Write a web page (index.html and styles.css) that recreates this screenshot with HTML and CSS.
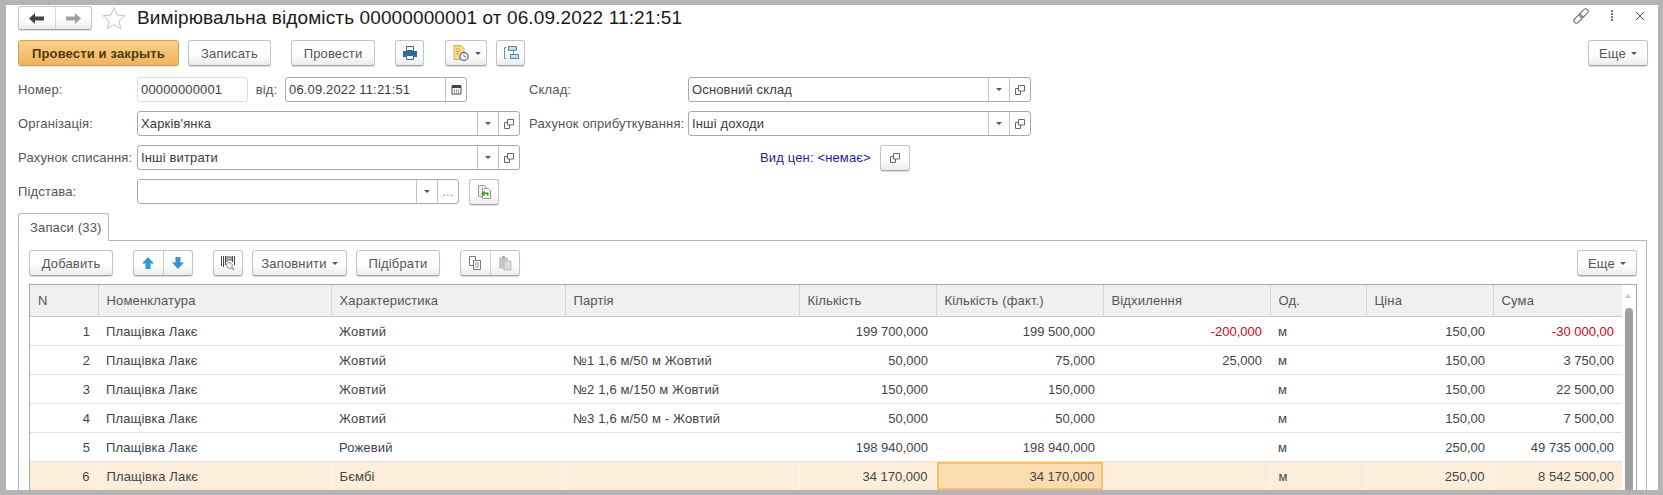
FILE: index.html
```html
<!DOCTYPE html>
<html lang="uk">
<head>
	<meta charset="UTF-8">
	<title>Вимірювальна відомість</title>
	<link rel="stylesheet" href="styles.css">
</head>
<body>

<svg width="0" height="0" class="defs">
	<symbol id="i-open" viewBox="0 0 12 12">
		<path d="M4.500 1.500h6v5.500h-6z" fill="#fff" stroke="#666"/>
		<path d="M4.500 4.500h-3v6h5v-3.500" fill="none" stroke="#666"/>
	</symbol>
</svg>

<div class="window">

	<div class="titlebar">
		<div class="btn nav-group">
			<span class="nav-cell">
				<svg width="15" height="11" viewBox="0 0 15 11"><path d="M0 5.500l6-5.500v3.500h9v4h-9v3.500z" fill="#444"/></svg>
			</span>
			<span class="nav-cell">
				<svg width="15" height="11" viewBox="0 0 15 11"><path d="M15 5.500l-6-5.500v3.500h-9v4h9v3.500z" fill="#a0a0a0"/></svg>
			</span>
		</div>
		<svg class="star" width="24" height="24" viewBox="0 0 24 24"><path d="M12 1.500l3 7.500 8 .7-6.100 5.200 1.900 7.900-6.800-4.200-6.800 4.200 1.900-7.900-6.100-5.200 8-.7z" fill="#fff" stroke="#c4c4c4"/></svg>
		<h1 class="title">Вимірювальна відомість 00000000001 от 06.09.2022 11:21:51</h1>
		<div class="win-icons">
			<svg width="16" height="16" viewBox="0 0 16 16" fill="none" stroke="#666"><g transform="rotate(-45 8 8)"><rect x="-1" y="5.500" width="10" height="5" rx="2.500"/><rect x="7" y="5.500" width="10" height="5" rx="2.500"/></g></svg>
			<svg width="4" height="12" viewBox="0 0 4 12"><path d="M1 0h2v2h-2zM1 3h2v2h-2zM1 6h2v2h-2zM1 9h2v2h-2z" fill="#777"/></svg>
			<svg width="10" height="10" viewBox="0 0 10 10"><path d="M1 1l8 8M9 1l-8 8" stroke="#666" fill="none"/></svg>
		</div>
	</div>

	<div class="toolbar main-bar">
		<button class="btn btn-primary">Провести и закрыть</button>
		<button class="btn w-save">Записать</button>
		<button class="btn w-post">Провести</button>
		<button class="btn icon-btn w-print">
			<svg width="16" height="16" viewBox="0 0 16 16"><path d="M4.500 1.500h7v4h-7z" fill="#fff" stroke="#2f6a94"/><path d="M1 6h14v6h-3v-2h-8v2h-3z" fill="#2f6a94"/><path d="M4.500 10.500h7v4h-7z" fill="#fff" stroke="#2f6a94"/></svg>
		</button>
		<button class="btn icon-btn w-report">
			<svg width="18" height="18" viewBox="0 0 18 18"><path d="M2 1.500h7l3 3v11h-10z" fill="#f7dc8a" stroke="#d0ad4c"/><path d="M4 5h4M4 7.500h4M4 10h3" stroke="#c9a23a"/><circle cx="12" cy="12.500" r="4" fill="#fff" stroke="#5b7fa3" stroke-width="1.500"/><path d="M12 10.500v2.200h2" fill="none" stroke="#5b7fa3"/></svg>
			<span class="caret"></span>
		</button>
		<button class="btn icon-btn w-struct">
			<svg width="16" height="16" viewBox="0 0 16 16"><path d="M3.500 2.500h-2v11h2" fill="none" stroke="#5d8fb3"/><path d="M10.500 5.500v4" stroke="#5d8fb3"/><path d="M5.500 1.500h8v4h-8zM7.500 9.500h8v4h-8z" fill="#c5dcec" stroke="#4f86ad"/></svg>
		</button>
		<button class="btn w-more push-right">Еще <span class="caret"></span></button>
	</div>

	<div class="form">
		<div class="form-row">
			<label class="lbl">Номер:</label>
			<div class="field field-num"><span class="val">00000000001</span></div>
			<span class="lbl-from">від:</span>
			<div class="field field-date">
				<span class="val">06.09.2022 11:21:51</span>
				<span class="cell"><svg width="11" height="11" viewBox="0 0 11 11"><path d="M1 2h9v8h-9z" fill="#fff" stroke="#444"/><path d="M1 1h9v3h-9zM3 5.500h1v1h-1zM5 5.500h1v1h-1zM7 5.500h1v1h-1zM3 7.500h1v1h-1zM5 7.500h1v1h-1zM7 7.500h1v1h-1z" fill="#444"/></svg></span>
			</div>
			<label class="lbl lbl-right lbl-first">Склад:</label>
			<div class="field field-right">
				<span class="val">Основний склад</span>
				<span class="cell"><span class="caret"></span></span>
				<span class="cell"><svg width="12" height="12"><use href="#i-open"/></svg></span>
			</div>
		</div>
		<div class="form-row">
			<label class="lbl">Організація:</label>
			<div class="field field-wide">
				<span class="val">Харків'янка</span>
				<span class="cell"><span class="caret"></span></span>
				<span class="cell"><svg width="12" height="12"><use href="#i-open"/></svg></span>
			</div>
			<label class="lbl lbl-right">Рахунок оприбуткування:</label>
			<div class="field field-right">
				<span class="val">Інші доходи</span>
				<span class="cell"><span class="caret"></span></span>
				<span class="cell"><svg width="12" height="12"><use href="#i-open"/></svg></span>
			</div>
		</div>
		<div class="form-row">
			<label class="lbl">Рахунок списання:</label>
			<div class="field field-wide">
				<span class="val">Інші витрати</span>
				<span class="cell"><span class="caret"></span></span>
				<span class="cell"><svg width="12" height="12"><use href="#i-open"/></svg></span>
			</div>
			<span class="price-type">Вид цен: &lt;немає&gt;</span>
			<button class="btn icon-btn w-open"><svg width="12" height="12"><use href="#i-open"/></svg></button>
		</div>
		<div class="form-row">
			<label class="lbl">Підстава:</label>
			<div class="field field-base">
				<span class="val"></span>
				<span class="cell"><span class="caret"></span></span>
				<span class="cell dots">...</span>
			</div>
			<button class="btn icon-btn w-open base-btn">
				<svg width="16" height="16" viewBox="0 0 16 16"><path d="M2.500 1.500h6l2 2v9h-8z" fill="#eee" stroke="#999"/><path d="M6.500 4.500h6l2 2v8h-8z" fill="#f6f6f6" stroke="#999"/><path d="M5 9.500l3.500-3v2h4v3h-2v-1.500h-2v2.500z" fill="#3d9a1d"/></svg>
			</button>
		</div>
	</div>

	<div class="tabs">
		<div class="tab">Запаси (33)</div>
	</div>

	<div class="panel">
		<div class="toolbar table-bar">
			<button class="btn w-add">Добавить</button>
			<div class="btn btn-group w-arrows">
				<span class="group-cell">
					<svg width="14" height="14" viewBox="0 0 14 14"><path d="M7 1l6 6.500h-3.500v5.500h-5v-5.500h-3.500z" fill="#2a9bd8"/></svg>
				</span>
				<span class="group-cell">
					<svg width="14" height="14" viewBox="0 0 14 14"><path d="M7 13l6-6.500h-3.500v-5.500h-5v5.500h-3.500z" fill="#3f8fcf"/></svg>
				</span>
			</div>
			<button class="btn icon-btn w-barcode">
				<svg width="16" height="16" viewBox="0 0 16 16"><path d="M1.500 1v10M3.500 1v11M5.500 1v9M7 1v6M9 1v5M11 1v5M12.500 1v6M14.500 1v9" stroke="#444" fill="none"/><circle cx="9.500" cy="10.500" r="3" fill="#eee" stroke="#999"/><path d="M11.500 12.500l2.500 2.500" stroke="#999" stroke-width="1.500"/></svg>
			</button>
			<button class="btn w-fill">Заповнити <span class="caret"></span></button>
			<button class="btn w-pick">Підібрати</button>
			<div class="btn btn-group w-copy">
				<span class="group-cell">
					<svg width="16" height="16" viewBox="0 0 16 16"><path d="M2.500 1.500h6v9h-6z" fill="#fff" stroke="#777"/><path d="M6.500 5.500h7v9h-7z" fill="#fff" stroke="#777"/><path d="M8 8h4M8 10h4M8 12h4" stroke="#999"/></svg>
				</span>
				<span class="group-cell is-off">
					<svg width="16" height="16" viewBox="0 0 16 16"><path d="M2 2.500h9v11h-9z" fill="#bbb"/><path d="M5 1h3v3h-3z" fill="#999"/><path d="M7 6h7v9h-7z" fill="#d5d5d5" stroke="#aaa"/></svg>
				</span>
			</div>
			<button class="btn w-more push-right">Еще <span class="caret"></span></button>
		</div>

		<div class="grid-wrap">
			<table class="grid">
				<colgroup>
					<col class="c-n"><col class="c-name"><col class="c-char"><col class="c-batch"><col class="c-qty"><col class="c-fact"><col class="c-dev"><col class="c-unit"><col class="c-price"><col class="c-sum">
				</colgroup>
				<thead>
					<tr><th>N</th><th>Номенклатура</th><th>Характеристика</th><th>Партія</th><th>Кількість</th><th>Кількість (факт.)</th><th>Відхилення</th><th>Од.</th><th>Ціна</th><th>Сума</th></tr>
				</thead>
				<tbody>
					<tr><td class="num">1</td><td>Плащівка Лакє</td><td>Жовтий</td><td></td><td class="num">199 700,000</td><td class="num">199 500,000</td><td class="num neg">-200,000</td><td>м</td><td class="num">150,00</td><td class="num neg">-30 000,00</td></tr>
					<tr><td class="num">2</td><td>Плащівка Лакє</td><td>Жовтий</td><td>№1 1,6 м/50 м Жовтий</td><td class="num">50,000</td><td class="num">75,000</td><td class="num">25,000</td><td>м</td><td class="num">150,00</td><td class="num">3 750,00</td></tr>
					<tr><td class="num">3</td><td>Плащівка Лакє</td><td>Жовтий</td><td>№2 1,6 м/150 м Жовтий</td><td class="num">150,000</td><td class="num">150,000</td><td class="num"></td><td>м</td><td class="num">150,00</td><td class="num">22 500,00</td></tr>
					<tr><td class="num">4</td><td>Плащівка Лакє</td><td>Жовтий</td><td>№3 1,6 м/50 м - Жовтий</td><td class="num">50,000</td><td class="num">50,000</td><td class="num"></td><td>м</td><td class="num">150,00</td><td class="num">7 500,00</td></tr>
					<tr><td class="num">5</td><td>Плащівка Лакє</td><td>Рожевий</td><td></td><td class="num">198 940,000</td><td class="num">198 940,000</td><td class="num"></td><td>м</td><td class="num">250,00</td><td class="num">49 735 000,00</td></tr>
					<tr class="is-current"><td class="num">6</td><td>Плащівка Лакє</td><td>Бємбі</td><td></td><td class="num">34 170,000</td><td class="num is-active">34 170,000</td><td class="num"></td><td>м</td><td class="num">250,00</td><td class="num">8 542 500,00</td></tr>
				</tbody>
			</table>
			<div class="scrollbar">
				<span class="scroll-up"></span>
				<span class="scroll-thumb"></span>
			</div>
		</div>
	</div>

</div>

</body>
</html>
```

FILE: styles.css
```css
* {
	box-sizing: border-box;
}
html, body {
	margin: 0;
	height: 100%;
	overflow: hidden;
}
body {
	background: #b4b4b4;
	padding: 5px 5px 5px 6px;
	font: 13px "Liberation Sans", Arial, sans-serif;
	letter-spacing: .15px;
	color: #555;
}
.defs {
	position: absolute;
}
.window {
	height: 485px;
	background: #fff;
	overflow: hidden;
	padding: 0 10px 0 12px;
}

/* buttons */
.btn {
	display: inline-flex;
	align-items: center;
	justify-content: center;
	height: 26px;
	padding: 0;
	border: 1px solid #c4c4c4;
	border-bottom-color: #a4a4a4;
	border-radius: 3px;
	background: linear-gradient(#fff, #fff 55%, #ececec);
	box-shadow: 0 1px 1px rgba(0,0,0,.15);
	font: inherit;
	letter-spacing: inherit;
	color: #555;
	flex: none;
}
.btn-primary {
	width: 161px;
	font-weight: bold;
	color: #4d3a14;
	border-color: #cfa45a;
	background: linear-gradient(#f9d08a, #f0b45c);
}
.caret {
	display: inline-block;
	width: 0;
	height: 0;
	border: 3px solid transparent;
	border-top: 3px solid #555;
	border-bottom: 0;
}

/* title */
.titlebar {
	display: flex;
	align-items: center;
	height: 26px;
}
.nav-group {
	width: 74px;
	height: 24px;
}
.nav-cell {
	flex: 1;
	height: 100%;
	display: flex;
	align-items: center;
	justify-content: center;
}
.nav-cell + .nav-cell {
	border-left: 1px solid #d8d8d8;
}
.star {
	margin-left: 10px;
}
.title {
	margin: 0 0 0 11px;
	font-size: 19px;
	font-weight: normal;
	letter-spacing: .12px;
	color: #1a1a1a;
	white-space: nowrap;
}
.win-icons {
	margin-left: auto;
	margin-bottom: 4px;
	display: flex;
	align-items: center;
	gap: 21px;
	padding-right: 3px;
}

/* toolbars */
.toolbar {
	display: flex;
	align-items: center;
}
.main-bar {
	height: 26px;
	margin-top: 9px;
	gap: 9px;
}
.push-right {
	margin-left: auto;
}
.w-save { width: 83px; }
.w-post { width: 84px; margin-left: 11px; }
.w-print { width: 29px; margin-left: 11px; }
.w-report { width: 42px; margin-left: 12px; gap: 5px; }
.w-struct { width: 29px; }
.w-more { width: 60px; gap: 5px; }

/* form */
.form {
	margin-top: 11px;
}
.form-row {
	display: flex;
	align-items: center;
	height: 25px;
	margin-bottom: 9px;
}
.lbl {
	width: 119px;
	flex: none;
	white-space: nowrap;
}
.lbl-from {
	width: 37px;
	text-align: center;
}
.lbl-right {
	width: 159px;
	margin-left: 9px;
}
.lbl-first {
	margin-left: 62px;
}
.field {
	display: flex;
	align-items: stretch;
	height: 25px;
	border: 1px solid #a9a9a9;
	border-radius: 3px;
	background: #fff;
	color: #3c3c3c;
	flex: none;
}
.val {
	flex: 1;
	padding-left: 3px;
	line-height: 23px;
	white-space: nowrap;
}
.cell {
	width: 21px;
	border-left: 1px solid #c4c4c4;
	display: flex;
	align-items: center;
	justify-content: center;
}
.field-num {
	width: 111px;
	border-color: #dcdcdc;
}
.field-date {
	width: 182px;
}
.field-wide {
	width: 383px;
}
.field-right {
	width: 343px;
}
.field-base {
	width: 322px;
}
.dots {
	color: #888;
}
.price-type {
	width: 120px;
	margin-left: 240px;
	color: #1f1f8f;
	white-space: nowrap;
}
.w-open {
	width: 30px;
	height: 26px;
}
.base-btn {
	margin-left: 10px;
}

/* tabs */
.tabs {
	display: flex;
	margin-top: 1px;
}
.tab {
	width: 91px;
	height: 28px;
	margin-bottom: -1px;
	padding: 6px 0 0 11px;
	border: 1px solid #b5b5b5;
	border-bottom-color: #fff;
	border-radius: 3px 3px 0 0;
	background: #fff;
	position: relative;
}
.panel {
	width: 1629px;
	height: 300px;
	padding: 9px 9px 0 10px;
	border: 1px solid #b5b5b5;
}

/* table toolbar */
.table-bar {
	height: 26px;
	margin-bottom: 8px;
}
.w-add { width: 84px; }
.w-arrows { width: 60px; margin-left: 20px; }
.w-barcode { width: 30px; margin-left: 20px; }
.w-fill { width: 95px; margin-left: 9px; gap: 5px; }
.w-pick { width: 84px; margin-left: 9px; }
.w-copy { width: 60px; margin-left: 20px; }
.group-cell {
	flex: 1;
	height: 100%;
	display: flex;
	align-items: center;
	justify-content: center;
}
.group-cell + .group-cell {
	border-left: 1px solid #c8c8c8;
}
.is-off {
	opacity: .8;
}

/* grid */
.grid-wrap {
	display: flex;
	border: 1px solid #a9a9a9;
	border-bottom: 0;
	width: 1608px;
}
.grid {
	width: 1592px;
	table-layout: fixed;
	border-collapse: collapse;
	flex: none;
}
.c-n { width: 68px; }
.c-name { width: 233px; }
.c-char { width: 234px; }
.c-batch { width: 234px; }
.c-qty { width: 137px; }
.c-fact { width: 167px; }
.c-dev { width: 167px; }
.c-unit { width: 96px; }
.c-price { width: 127px; }
.c-sum { width: 129px; }
.grid th {
	height: 31px;
	padding: 0 8px;
	background: #f0f0f0;
	border-left: 1px solid #d6d6d6;
	border-bottom: 1px solid #c9c9c9;
	font-weight: normal;
	text-align: left;
	color: #555;
}
.grid th:first-child {
	border-left: 0;
}
.grid td {
	height: 29px;
	padding: 2px 8px 0;
	border-bottom: 1px solid #e2e2e2;
	white-space: nowrap;
	color: #444;
}
.grid .num {
	text-align: right;
	letter-spacing: 0;
}
.grid .neg {
	color: #d0021b;
}
.is-current td {
	background: #fdeedb;
	border-left: 1px solid #fff6ea;
}
.is-current td:first-child {
	border-left: 0;
}
.grid .is-active {
	background: #fbdcae;
	box-shadow: inset 0 0 0 2px #f7bf6a;
}
.scrollbar {
	flex: 1;
	position: relative;
}
.scroll-up {
	position: absolute;
	top: 9px;
	left: 3px;
	border: 3px solid transparent;
	border-bottom: 4px solid #c8c8c8;
	border-top: 0;
}
.scroll-thumb {
	position: absolute;
	top: 23px;
	left: 3px;
	width: 8px;
	height: 400px;
	border-radius: 4px;
	background: #a0a0a0;
}
```
